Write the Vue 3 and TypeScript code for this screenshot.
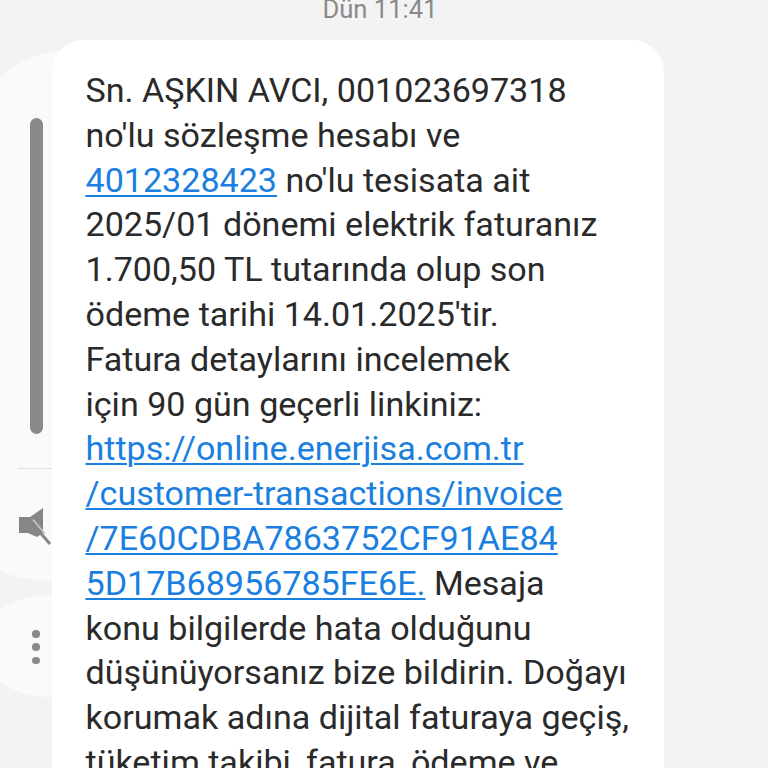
<script setup lang="ts">
const lines: { text: string; link?: string }[] = [
  { text: 'Sn. AŞKIN AVCI, 001023697318' },
  { text: "no'lu sözleşme hesabı ve" },
  { link: '4012328423', text: " no'lu tesisata ait" },
  { text: '2025/01 dönemi elektrik faturanız' },
  { text: '1.700,50 TL tutarında olup son' },
  { text: "ödeme tarihi 14.01.2025'tir." },
  { text: 'Fatura detaylarını incelemek' },
  { text: 'için 90 gün geçerli linkiniz:' },
  { link: 'https://online.enerjisa.com.tr', text: '' },
  { link: '/customer-transactions/invoice', text: '' },
  { link: '/7E60CDBA7863752CF91AE84', text: '' },
  { link: '5D17B68956785FE6E.', text: ' Mesaja' },
  { text: 'konu bilgilerde hata olduğunu' },
  { text: 'düşünüyorsanız bize bildirin. Doğayı' },
  { text: 'korumak adına dijital faturaya geçiş,' },
  { text: 'tüketim takibi, fatura, ödeme ve' },
]
</script>

<template>
  <div class="screen">
    <div class="date">Dün 11:41</div>
    <div class="row">
      <aside class="rail">
        <div class="panel panel-top">
          <div class="scrollbar"></div>
          <div class="divider"></div>
          <div class="mute">
            <svg width="34" height="40" viewBox="19 506 34 40">
              <path d="M19 517 H30 L43 508 V533 L37 537 L28 533 H19 Z" fill="#868686" />
              <path d="M33 519.5 L45 534" stroke="#c4c4c4" stroke-width="1.8" />
              <path d="M31 522 L50 544" stroke="#868686" stroke-width="3" />
            </svg>
          </div>
        </div>
        <div class="panel panel-bottom">
          <span class="dot"></span>
          <span class="dot"></span>
          <span class="dot"></span>
        </div>
      </aside>
      <main class="bubble">
        <div v-for="(line, i) in lines" :key="i" class="line">
          <a v-if="line.link" class="link">{{ line.link }}</a>{{ line.text }}
        </div>
      </main>
    </div>
  </div>
</template>

<style>
html, body { margin: 0; background: #f3f3f3; }
</style>

<style scoped>
.screen {
  width: 768px;
  height: 768px;
  overflow: hidden;
  background: #f3f3f3;
  font-family: Roboto, "Noto Sans", sans-serif;
}
.date {
  height: 40px;
  margin-top: -6px;
  margin-bottom: 6px;
  padding-right: 8px;
  box-sizing: border-box;
  line-height: 30px;
  text-align: center;
  font-size: 25.6px;
  color: #8a8a8a;
}
.row {
  display: flex;
  align-items: flex-start;
}
.rail {
  width: 52px;
  flex: none;
  padding-top: 10px;
  display: flex;
  flex-direction: column;
  gap: 14px;
}
.panel {
  background: #fafafa;
  width: 110px;
  margin-left: -20px;
  box-sizing: border-box;
}
.panel-top {
  height: 531px;
  padding-top: 68px;
  border-radius: 90px 0 0 70px / 75px 0 0 35px;
}
.panel-bottom {
  height: 102px;
  display: flex;
  flex-direction: column;
  align-items: flex-start;
  gap: 5.8px;
  padding: 35px 0 0 52px;
  border-radius: 70px 0 0 70px / 50px 0 0 50px;
}
.scrollbar {
  width: 13px;
  height: 316px;
  margin-left: 50px;
  border-radius: 7px;
  background: #8a8a8a;
}
.divider {
  width: 34px;
  height: 1px;
  margin: 34px 0 0 38px;
  background: #dedede;
}
.mute {
  margin: 37px 0 0 39px;
  height: 40px;
}
.dot {
  width: 7.5px;
  height: 7.5px;
  border-radius: 50%;
  background: #8a8a8a;
}
.bubble {
  position: relative;
  width: 612px;
  height: 800px;
  box-sizing: border-box;
  padding: 28px 0 0 33.5px;
  background: #fff;
  border-radius: 32px;
  font-size: 34.1px;
  line-height: 44.8px;
  color: #2a2a2a;
  white-space: pre;
}
.link {
  color: #1a7fe0;
  text-decoration: underline;
  text-decoration-thickness: 2px;
  text-underline-offset: 3px;
}
</style>
